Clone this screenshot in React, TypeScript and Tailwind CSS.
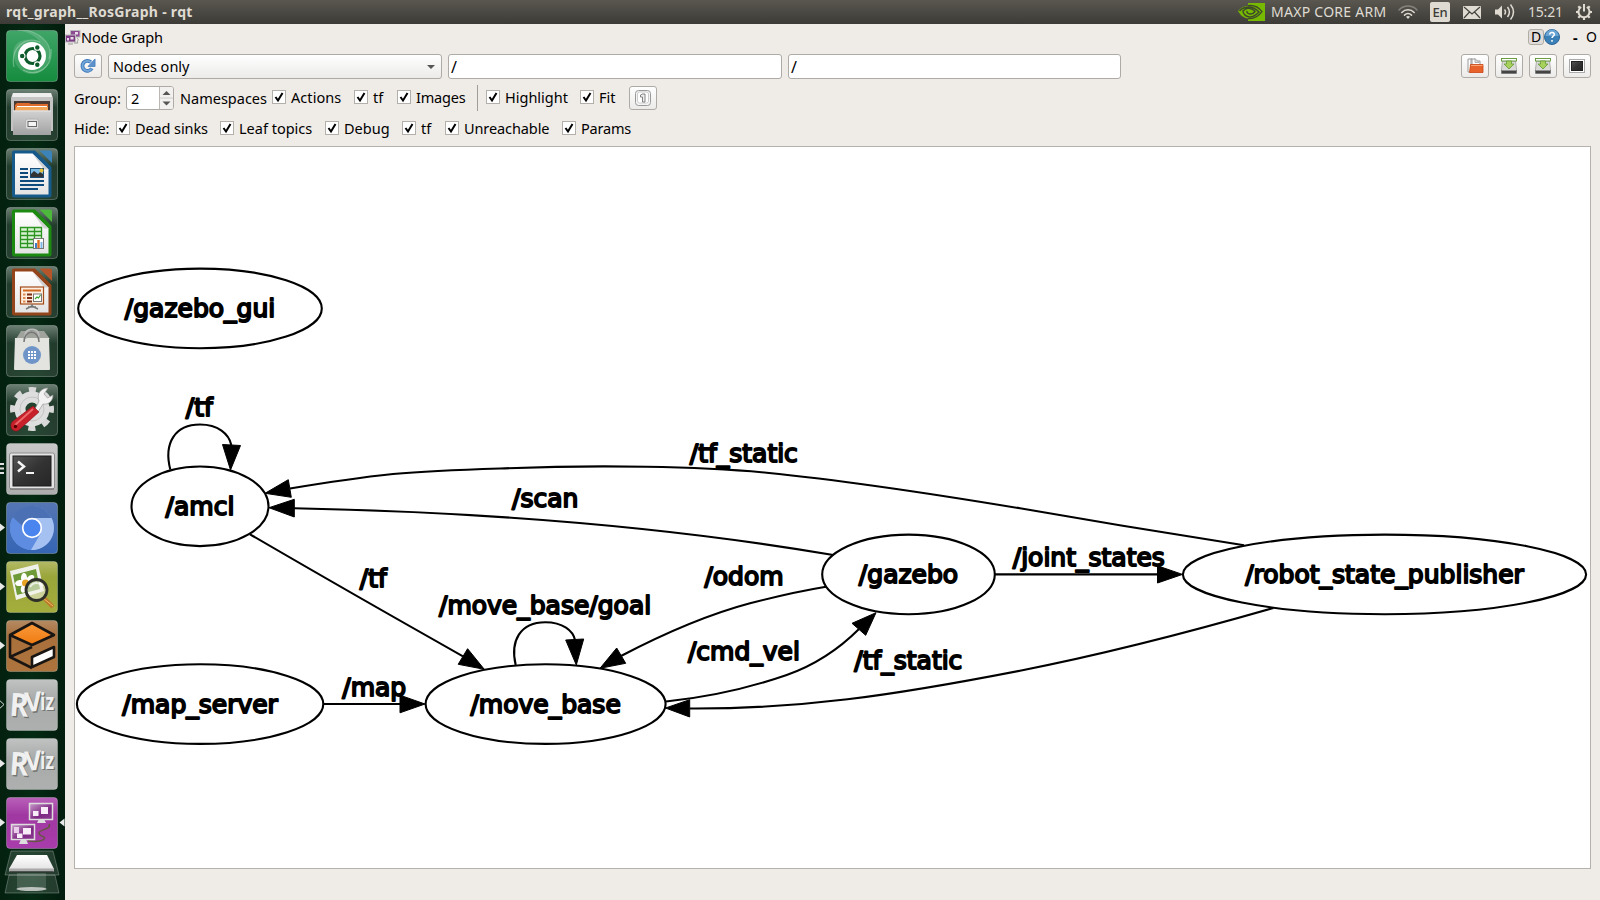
import React from "react";

const UI_FONT = "font-['Noto_Sans',sans-serif]";

/* ---------- top panel ---------- */

function TopPanel() {
  return (
    <header className="flex h-6 shrink-0 items-center bg-linear-to-b from-[#59574f] to-[#3d3b37] pl-[6px] pr-[7px] text-[#dfdbd2]">
      <span className="text-[14px] leading-6 font-bold tracking-[0.290px] whitespace-nowrap">rqt_graph__RosGraph - rqt</span>
      <div className="ml-auto flex h-6 items-center">
        <svg width="27" height="18" viewBox="0 0 27 18" className="mr-[6px]">
          <path d="M10 0h17v18H10v-2.500C5 15 2 11.500 0 8 3 4.500 6 3 10 2.700z" fill="#76b900" />
          <path d="M1.500 8C5 4.500 8 4 11 4c5 0 8 3 10 5-2 2-5 5-9 5-4 0-7-3-7-6 2-2 5-3 7-2.500 3 .5 4 2 5 3-1 1.500-3 2.700-5 2.500-2 0-3.500-1.500-3-3" fill="none" stroke="#3f4a2a" strokeWidth="1.500" />
          <path d="M10 2.700c7-1 11 2 14 6-3 4-8 7.500-14 6.800" fill="none" stroke="#3f4a2a" strokeWidth="1.300" />
        </svg>
        <span className="w-[127px] text-[14px] leading-6 tracking-[0.270px] whitespace-nowrap">MAXP CORE ARM</span>
        <svg width="20" height="16" viewBox="0 0 20 16" className="mr-[12px]" fill="none" strokeLinecap="round">
          <path d="M1 6C6 .8 14 .8 19 6" stroke="#85837c" strokeWidth="1.500" />
          <path d="M3.800 8.500C7.300 4.900 12.700 4.900 16.200 8.500" stroke="#dfdbd2" strokeWidth="1.500" />
          <path d="M6.500 11.100c2-2 5-2 7 0" stroke="#dfdbd2" strokeWidth="1.500" />
          <path d="M8 12.800c1.200-1 2.800-1 4 0L10 15z" fill="#dfdbd2" />
        </svg>
        <span className="mr-[13px] flex h-5 w-5 items-center justify-center rounded-[2px] bg-[#dfdbd2] pt-px text-[13px] leading-none font-medium tracking-[-0.3px] text-[#3c3b37]">En</span>
        <svg width="18" height="13" viewBox="0 0 18 13" className="mr-[13px]">
          <rect width="18" height="13" rx="1" fill="#dfdbd2" />
          <path d="M1 1l8 7 8-7M1 12l5.500-6M17 12l-5.500-6" fill="none" stroke="#45433e" strokeWidth="1.200" />
        </svg>
        <svg width="21" height="18" viewBox="0 0 21 18" className="mr-[13px]">
          <path d="M1 6.500h3L8 2.500v13L4 11.500H1z" fill="#dfdbd2" />
          <path d="M10.500 6.500q2 2.500 0 5M13.500 4q3.800 5 0 10M16.500 1.500q6 7.500 0 15" fill="none" stroke="#dfdbd2" strokeWidth="1.500" />
        </svg>
        <span className="w-[47px] text-[14px] leading-6 tracking-[-0.200px]">15:21</span>
        <svg width="18" height="18" viewBox="0 0 18 18" fill="none" stroke="#dfdbd2">
          <path d="M6.200 4A5.500 5.500 0 1 0 11.800 4" strokeWidth="2" />
          <path d="M9 1v7.500" strokeWidth="2" />
          <path d="M3.300 3.300l2 2M14.700 3.300l-2 2M1 9h2.500M14.500 9H17M3.300 14.700l2-2M14.700 14.700l-2-2M9 14.500V17" strokeWidth="2.200" />
        </svg>
      </div>
    </header>
  );
}

/* ---------- launcher ---------- */

function Tile({ children, fill = "url(#glass)", marker }: { children: React.ReactNode; fill?: string; marker?: "one" | "three" | "hollow" | "active" }) {
  return (
    <svg width="65" height="52" viewBox="-6 0 65 52" className="block shrink-0">
      <rect x="0.500" y="0.500" width="51" height="51" rx="3.500" fill={fill} stroke="#ffffff" strokeOpacity="0.250" />
      {children}
      {(marker === "one" || marker === "active") && <path d="M-6 21.500l5 4-5 4z" fill="#e8e8e8" />}
      {marker === "active" && <path d="M58.500 21.500l-5 4 5 4z" fill="#e8e8e8" />}
      {marker === "hollow" && <path d="M-6 21.800l4 3.700-4 3.700" fill="none" stroke="#d8d8d8" />}
      {marker === "three" && <path d="M-6 21h4M-6 25.500h4M-6 30h4" stroke="#e0e0e0" strokeWidth="2" />}
    </svg>
  );
}

function Gradients() {
  return (
    <svg width="0" height="0" className="absolute">
      <defs>
        <linearGradient id="glass" x1="0" y1="0" x2="0" y2="1">
          <stop offset="0" stopColor="#fff" stopOpacity="0.420" />
          <stop offset="0.350" stopColor="#fff" stopOpacity="0.120" />
          <stop offset="1" stopColor="#fff" stopOpacity="0.140" />
        </linearGradient>
        <linearGradient id="dash" x1="0" y1="0" x2="0" y2="1"><stop offset="0" stopColor="#3fa568" /><stop offset="1" stopColor="#158c3e" /></linearGradient>
        <linearGradient id="metal" x1="0" y1="0" x2="0" y2="1"><stop offset="0" stopColor="#d2d2d2" /><stop offset="1" stopColor="#a2a2a2" /></linearGradient>
        <linearGradient id="paper" x1="0" y1="0" x2="0" y2="1"><stop offset="0" stopColor="#fff" /><stop offset="1" stopColor="#e4e4e4" /></linearGradient>
        <linearGradient id="dark" x1="0" y1="0" x2="1" y2="1"><stop offset="0" stopColor="#555" /><stop offset="0.500" stopColor="#333" /><stop offset="1" stopColor="#262626" /></linearGradient>
        <linearGradient id="chrome" x1="0" y1="0" x2="0" y2="1"><stop offset="0" stopColor="#5576b4" /><stop offset="1" stopColor="#3565b4" /></linearGradient>
        <linearGradient id="olive" x1="0" y1="0" x2="0" y2="1"><stop offset="0" stopColor="#b3ba66" /><stop offset="0.300" stopColor="#9aa53a" /><stop offset="1" stopColor="#a3ae3c" /></linearGradient>
        <linearGradient id="brown" x1="0" y1="0" x2="0" y2="1"><stop offset="0" stopColor="#b58a62" /><stop offset="0.300" stopColor="#a9703c" /><stop offset="1" stopColor="#ad743d" /></linearGradient>
        <linearGradient id="gray" x1="0" y1="0" x2="0" y2="1"><stop offset="0" stopColor="#c0c3c1" /><stop offset="0.400" stopColor="#a7aaa8" /><stop offset="1" stopColor="#adb0ae" /></linearGradient>
        <linearGradient id="term" x1="0" y1="0" x2="0" y2="1"><stop offset="0" stopColor="#c8c8c8" /><stop offset="1" stopColor="#adadad" /></linearGradient>
        <linearGradient id="purple" x1="0" y1="0" x2="0" y2="1"><stop offset="0" stopColor="#b961b9" /><stop offset="0.350" stopColor="#a038a2" /><stop offset="1" stopColor="#a93cab" /></linearGradient>
        <linearGradient id="orange" x1="0" y1="0" x2="0" y2="1"><stop offset="0" stopColor="#f89a3c" /><stop offset="1" stopColor="#f07a10" /></linearGradient>
        <linearGradient id="screen" x1="0" y1="0" x2="1" y2="1"><stop offset="0" stopColor="#c99aca" /><stop offset="0.600" stopColor="#7d2782" /><stop offset="1" stopColor="#8d3a92" /></linearGradient>
      </defs>
    </svg>
  );
}

function OfficePage({ color, light, children }: { color: string; light: string; children: React.ReactNode }) {
  return (
    <g>
      <path d="M8 2.500h21L45.500 19v28a2.500 2.500 0 0 1-2.500 2.500H8.500A2.500 2.500 0 0 1 6 47V4.500a2 2 0 0 1 2-2z" fill={color} />
      <path d="M9 5.500h17.500L42.500 21.500V46.500H9z" fill="url(#paper)" />
      <path d="M26.500 5.500L42.500 21.500H38z" fill="#d0d0d0" />
      <path d="M33.500 2.500H44a2 2 0 0 1 2 2V15z" fill={light} />
      {children}
    </g>
  );
}

function RvizGlyphs() {
  return (
    <>
      <text x="3" y="36.500" fontSize="32" transform="rotate(4 4.500 37)" textLength="19" lengthAdjust="spacingAndGlyphs">R</text>
      <text x="19.500" y="33" fontSize="27" transform="rotate(-5 20 33)" textLength="17" lengthAdjust="spacingAndGlyphs">V</text>
      <text x="34" y="30.500" fontSize="24" textLength="14" lengthAdjust="spacingAndGlyphs">iz</text>
    </>
  );
}

function RvizLetters() {
  return (
    <g fontFamily="'Open Sans', sans-serif" fontWeight="bold">
      <g fill="#737573" transform="translate(1.300 1.500)"><RvizGlyphs /></g>
      <g fill="#f0f0f0"><RvizGlyphs /></g>
    </g>
  );
}

function Launcher() {
  return (
    <nav className="flex w-[65px] shrink-0 flex-col gap-[7px] overflow-hidden bg-linear-to-r from-[#04200f] via-[#042a13] to-[#031c0d] pt-[6px]">
      <Gradients />
      <Tile fill="url(#dash)">
        <g fill="none" stroke="#a5d8b5" strokeOpacity="0.500" strokeWidth="1.200">
          <path d="M8 37C4 18 20 5 34 12M12 0C30-1 48 12 43 29M45 19c2 20-15 28-28 21" />
        </g>
        <path d="M10 0C30 0 44 10 44 26a18 18 0 0 1-18 18C16 44 9 36 8 28 4 12 18 6 34 12 28 4 20 2 10 0z" fill="#fff" fillOpacity="0.150" />
        <circle cx="26" cy="26" r="14" fill="#fff" />
        <circle cx="26.500" cy="26" r="7.500" fill="none" stroke="#0d5a2b" strokeWidth="3.200" />
        <path d="M19 26L13 26M30 20l3.500-6M30 32l3.500 6" stroke="#fff" strokeWidth="1.200" />
        <g fill="#0d5a2b" stroke="#fff" strokeWidth="1.100"><circle cx="16.200" cy="26" r="2.800" /><circle cx="31.300" cy="17.500" r="2.800" /><circle cx="31.300" cy="34.700" r="2.800" /></g>
      </Tile>
      <Tile>
        <path d="M7 4h38l2 5v33H5V9z" fill="#c4c4c4" /><path d="M7 4h38l1 4H6z" fill="#eee" />
        <rect x="8" y="12" width="36" height="12" fill="#4a3c34" />
        <path d="M9 16l2-2h12l2 1h17v8H9z" fill="#dc6b2c" /><path d="M10 18h32v5H9z" fill="#f4a657" /><path d="M11 17.500h30" stroke="#fff" />
        <path d="M7 21.500h37a1 1 0 0 1 1 1V46H7z" fill="url(#metal)" /><path d="M7 22h38" stroke="#e5e5e5" />
        <rect x="19.500" y="30" width="13" height="10" rx="2" fill="#dedede" stroke="#b3b3b3" /><rect x="22" y="32.500" width="8.500" height="5" fill="#f5f5f5" stroke="#666" />
      </Tile>
      <Tile>
        <OfficePage color="#165a8c" light="#3b83b8">
          <path d="M14 21h8M14 25h8M14 29h8M14 33h24M14 37h24M14 41h18" stroke="#0e4a7b" strokeWidth="2" />
          <rect x="24.500" y="20.500" width="13" height="9" fill="#7dbbe6" stroke="#1a4d73" /><path d="M25 29v-3l3-3 4 3 2-2 3 2v3z" fill="#333" /><circle cx="35.500" cy="22.500" r="2" fill="#e7c33c" />
        </OfficePage>
      </Tile>
      <Tile>
        <OfficePage color="#1c8a10" light="#4cb83c">
          <rect x="14.500" y="20.500" width="21" height="20" fill="#d9f2d4" /><path d="M14.500 20.500h21v20h-21zM14.500 24.500h21M14.500 28.500h21M14.500 32.500h21M14.500 36.500h21M21.500 20v21M28.500 20v21" fill="none" stroke="#2c9420" strokeWidth="1.300" />
          <rect x="27.500" y="31.500" width="10" height="10" fill="#fff" stroke="#777" /><path d="M30 36v5" stroke="#3d7ec4" strokeWidth="2" /><path d="M32.500 33v8" stroke="#e06b1b" strokeWidth="2.400" /><path d="M35.500 35v6" stroke="#7db7e8" strokeWidth="2" />
        </OfficePage>
      </Tile>
      <Tile>
        <OfficePage color="#94441a" light="#b5562a">
          <rect x="14.500" y="21" width="23" height="17" fill="#fdeee2" stroke="#a54d19" strokeWidth="1.200" /><path d="M17 24.500h18" stroke="#d1681f" strokeWidth="2" /><path d="M17 28.500h2.500M17 32h2.500M17 35.500h2.500" stroke="#e08b4d" strokeWidth="2" /><path d="M21 28.500h5M21 32h5M21 35.500h5" stroke="#7d2d12" strokeWidth="2" /><rect x="27.500" y="28" width="8" height="7.500" fill="#fff" stroke="#777" /><path d="M29 33l2-2 1.500 1 2-3" fill="none" stroke="#39a533" strokeWidth="1.200" /><path d="M26 38v2l-6 3M26 40l6 3M22 41h8" fill="none" stroke="#777" strokeWidth="1.500" />
        </OfficePage>
      </Tile>
      <Tile>
        <path d="M10 14l5-8h23l6 8z" fill="#9fa39c" /><path d="M9 13h34l1 31a1 1 0 0 1-1 1H9a1 1 0 0 1-1-1z" fill="#e3e4df" />
        <path d="M19.500 14V9c0-6 13-6 13 0v5" fill="none" stroke="#bbb" strokeWidth="2" /><path d="M18 17c0-13 15-13 15 0" fill="none" stroke="#777" strokeWidth="1.500" />
        <circle cx="26" cy="30" r="9" fill="#6f95c8" />
        <g fill="#fff"><path d="M22 26h2v2h-2zM25 26h2v2h-2zM28 26h2v2h-2zM22 29h2v2h-2zM25 29h2v2h-2zM28 29h2v2h-2zM22 32h2v2h-2zM25 32h2v2h-2zM28 32h2v2h-2z" /></g>
      </Tile>
      <Tile>
        <circle cx="26" cy="25" r="19.500" fill="none" stroke="#d8d8d8" strokeWidth="5" strokeDasharray="7.300 7.980" strokeDashoffset="3.600" />
        <circle cx="26" cy="25" r="12" fill="none" stroke="#dedede" strokeWidth="11" /><circle cx="26" cy="25" r="12" fill="none" stroke="#c4c4c4" />
        <path d="M29 25l4-8c-3-7 2-13 9-13l-4 6 3.500 4 5.500-3c0 7-6 10-10 9l-5 8z" fill="#f2f2f2" stroke="#999" strokeWidth="0.700" />
        <path d="M27 22l6 6L14 45c-4 5-12 0-8-7z" fill="#c8202a" stroke="#8c1019" strokeWidth="0.600" /><path d="M27 25L9 41" stroke="#ec6a6a" strokeWidth="1.700" /><circle cx="9.500" cy="42.500" r="1.700" fill="#500" />
      </Tile>
      <Tile fill="url(#term)" marker="three">
        <rect x="3.500" y="10" width="45" height="36" rx="2" fill="#e4e4e4" stroke="#8d8d8d" /><path d="M4 46h44" stroke="#666" strokeWidth="1.200" />
        <rect x="7" y="13" width="38" height="30" fill="url(#dark)" stroke="#1d1d1d" />
        <path d="M12 18.500l6 5-6 5" fill="none" stroke="#f5f5f5" strokeWidth="2.500" /><path d="M20 30h8" stroke="#f5f5f5" strokeWidth="2" />
      </Tile>
      <Tile fill="url(#chrome)" marker="one">
        <circle cx="26" cy="26" r="22" fill="#6b96e3" /><path d="M26 26L6.500 16A22 22 0 0 0 25 48l9-17z" fill="#5d8ce0" /><path d="M26 16h19.500A22 22 0 0 1 25 48l10-17z" fill="#a5c1f2" /><path d="M6.500 15A22 22 0 0 1 45.500 16H26c-6 0-9 4-9.500 8z" fill="#4c70b4" />
        <circle cx="26" cy="26" r="9.300" fill="#4a84ee" stroke="#fff" strokeWidth="1.700" />
      </Tile>
      <Tile fill="url(#olive)" marker="one">
        <path d="M4 10l28-7 6 27-28 9z" fill="#f1f1ec" /><path d="M7 14l23-6 4 20-23 6z" fill="#6f9a38" />
        <g fill="#fff"><ellipse cx="18" cy="17" rx="3" ry="5" /><ellipse cx="24" cy="18" rx="3" ry="5" transform="rotate(50 24 18)" /><ellipse cx="14" cy="22" rx="3" ry="5" transform="rotate(80 14 22)" /><ellipse cx="18" cy="27" rx="3" ry="5" transform="rotate(20 18 27)" /></g>
        <circle cx="19.500" cy="22" r="3.500" fill="#e7a323" /><path d="M38 37l9 9" stroke="#bd7a2a" strokeWidth="4" /><path d="M37 37l10 8" stroke="#edbf66" strokeWidth="1" />
        <circle cx="30.500" cy="29" r="10.500" fill="#f2f3ea" fillOpacity="0.550" stroke="#2d2f28" strokeWidth="2.800" /><path d="M24 26c4-6 10-4 13-1" fill="none" stroke="#fff" strokeOpacity="0.700" strokeWidth="2" />
      </Tile>
      <Tile fill="url(#brown)" marker="one">
        <path d="M4 15L26 3l22 12-22 10z" fill="url(#orange)" /><path d="M4 15L26 3l22 12-22 10zM4 15v22l22 11M4 37l22-10" fill="none" stroke="#181512" strokeWidth="2.600" strokeLinejoin="round" /><path d="M26 47V37l22-10v10z" fill="#fff" stroke="#181512" strokeWidth="2.600" strokeLinejoin="round" />
      </Tile>
      <Tile fill="url(#gray)" marker="hollow"><RvizLetters /></Tile>
      <Tile fill="url(#gray)" marker="one"><RvizLetters /></Tile>
      <div className="flex flex-col">
        <Tile fill="url(#purple)" marker="active">
          <path d="M43 27c3 6-10 5-10 9s8 3 5 6-8 3-16 2" fill="none" stroke="#654" strokeWidth="1.500" />
          <path d="M33 22h5l2 4h-9zM15 42h5l2 5h-9z" fill="#ddd" />
          <rect x="23.500" y="6.500" width="23" height="16" fill="url(#screen)" stroke="#ddd" strokeWidth="1.500" /><rect x="5.500" y="27.500" width="23" height="15" fill="url(#screen)" stroke="#ddd" strokeWidth="1.500" />
          <path d="M35 10h7v7h-7zM27 14h5.500v5H27zM17 31h8v6.500h-8zM11 36.500h5.500v4.500H11z" fill="#f8ecf8" /><path d="M8 30h5v6H8z" fill="#e9cdea" />
        </Tile>
        <svg width="65" height="47" viewBox="0 0 65 47" className="block shrink-0">
          <path d="M11 2h42l6 24H5zM9 26h46l4 18H5z" fill="#fff" fillOpacity="0.130" stroke="#fff" strokeOpacity="0.250" />
          <path d="M17 6h30l7 14H9z" fill="url(#paper)" /><path d="M9 19.500h45v3H9z" fill="#aaa" /><path d="M10 23h43" stroke="#333" />
          <path d="M17 24h29v16H17z" fill="#fff" fillOpacity="0.150" /><ellipse cx="31.500" cy="40" rx="15" ry="2" fill="#ddd" fillOpacity="0.800" />
        </svg>
      </div>
    </nav>
  );
}

/* ---------- form widgets ---------- */

function Check({ label, className }: { label: string; className: string }) {
  return (
    <label className={`flex h-6 items-center whitespace-nowrap ${className}`}>
      <svg width="14" height="14" viewBox="0 0 14 14" className="mr-[5px] shrink-0">
        <rect x="0.500" y="0.500" width="13" height="13" fill="#fff" stroke="#b3afaa" />
        <path d="M3.500 7l2.500 3.500L10.500 3" fill="none" stroke="#000" strokeWidth="2" />
      </svg>
      <span>{label}</span>
    </label>
  );
}

function ToolButton({ children }: { children: React.ReactNode }) {
  return (
    <button className="flex h-6 w-7 shrink-0 items-center justify-center rounded-[3px] border border-[#aeaba6] bg-linear-to-b from-white to-[#ecebe9]">
      {children}
    </button>
  );
}

function SaveIcon() {
  return (
    <svg width="16" height="16" viewBox="0 0 16 16">
      <path d="M1.500 3h13l1 8v4.500H.5V11z" fill="#d8d8d6" stroke="#999" strokeWidth="0.700" />
      <path d="M.5 12h15v3.500H.5z" fill="#444" /><path d="M1 12h14" stroke="#ddd" />
      <rect x="0.500" y="0.500" width="15" height="2.500" fill="#fff" stroke="#5e9430" strokeWidth="0.900" />
      <path d="M5.500 3h5v3h2.500L8 11 3 6h2.500z" fill="#a8d05c" stroke="#659a34" strokeWidth="0.800" />
    </svg>
  );
}

/* ---------- graph ---------- */

const nodes = [
  { name: "/gazebo_gui", cx: 200, cy: 308.4, rx: 121.8 },
  { name: "/amcl", cx: 200, cy: 506.3, rx: 68.5 },
  { name: "/map_server", cx: 200.1, cy: 704.1, rx: 123.2 },
  { name: "/move_base", cx: 545.6, cy: 704.1, rx: 120 },
  { name: "/gazebo", cx: 908.5, cy: 574.4, rx: 86.3 },
  { name: "/robot_state_publisher", cx: 1384.5, cy: 574.4, rx: 201.6 },
];

const labels = [
  { text: "/tf", x: 199.3, y: 416.4 },
  { text: "/tf_static", x: 743.8, y: 462 },
  { text: "/scan", x: 545.3, y: 507.4 },
  { text: "/tf", x: 373.3, y: 587 },
  { text: "/move_base/goal", x: 545.1, y: 614 },
  { text: "/odom", x: 744, y: 584.5 },
  { text: "/cmd_vel", x: 743.9, y: 659.6 },
  { text: "/tf_static", x: 908.3, y: 668.8 },
  { text: "/joint_states", x: 1088.8, y: 566.3 },
  { text: "/map", x: 374.2, y: 696 },
];

const edges = [
  { d: "M170.300 469.500C163.500 443 175 424.500 200 424.500C218 424.500 229 434 231.300 445", head: "222.500,444.500 240.500,445.500 230.500,470" },
  { d: "M515.700 665C510 641 520 622.200 545.300 622.200C563 622.200 573 631 575 640", head: "565.700,640 583.700,639 576.300,665" },
  { d: "M250 534.300Q349 592 463 656.300", head: "467.600,648.700 458.200,664.300 484.300,669.300" },
  { d: "M323.700 704H401", head: "400,695.200 400,712.800 425,704" },
  { d: "M826 586.700C800 591 774 597 750 603.300C706 615 667 632 621 656", head: "616.700,648 625.700,663.300 600,668.300" },
  { d: "M666 701.500C710 697 752 687 786.700 675C815 665 838 650 859 629", head: "852,623.300 865.700,635.300 876,612.700" },
  { d: "M1273.400 608C1190 632 1105 654 1020 670.700C890 696 800 709 690 708.500", head: "689.700,699.700 689.700,717 665.500,708" },
  { d: "M833.300 555C660 525.500 480 512 294 508.300", head: "294.300,499.300 294.300,517 269,507.700" },
  { d: "M1244 545.300C1160 532 1100 522 1020 508.300C940 495 850 481 766.700 472.700C700 466.500 600 464.500 500 468.500C450 470 420 471.500 393 474C355 478 320 483.500 290 488.500", head: "288.300,479.700 291.300,497.300 265,493.300" },
  { d: "M995 574.400H1158", head: "1157.500,565.800 1157.500,583 1182.500,574.400" },
];

function Graph() {
  return (
    <svg width="1515" height="721" viewBox="75 147 1515 721" className="block">
      <g fill="none" stroke="#000" strokeWidth="2.100">
        {nodes.map((n) => <ellipse key={n.name} cx={n.cx} cy={n.cy} rx={n.rx} ry="39.800" />)}
        {edges.map((e) => <path key={e.d} d={e.d} />)}
      </g>
      <g fill="#000" stroke="#000" strokeWidth="1">
        {edges.map((e) => <polygon key={e.head} points={e.head} />)}
      </g>
      <g fontFamily="'DejaVu Sans', sans-serif" fontSize="25" textAnchor="middle" stroke="#000" strokeWidth="1.850" strokeLinejoin="round">
        {nodes.map((n) => <text key={n.name} x={n.cx} y={n.cy + 9}>{n.name}</text>)}
        {labels.map((l, i) => <text key={i} x={l.x} y={l.y}>{l.text}</text>)}
      </g>
    </svg>
  );
}

/* ---------- window ---------- */

export default function App() {
  return (
    <div className={`flex h-[900px] w-[1600px] flex-col overflow-hidden bg-[#efebe7] text-[14.500px] leading-6 text-black ${UI_FONT}`}>
      <TopPanel />
      <div className="flex min-h-0 flex-1">
        <Launcher />
        <main className="flex min-w-0 flex-1 flex-col">
          <div className="flex h-7 items-center pr-[2px] pb-[2px]">
            <svg width="16" height="16" viewBox="0 0 16 16">
              <rect x="5.500" y="1.500" width="9.500" height="6.500" fill="#8b4a91" stroke="#bbb" /><rect x="0.500" y="6" width="10" height="7" fill="#7b3a82" stroke="#bbb" />
              <path d="M10 3h3v2.500h-3zM5.500 8h3v2.500h-3zM2 9h2v2.500H2z" fill="#ecd8ee" /><path d="M3 15h5M12 9c3 2-1 3 1 5H9" fill="none" stroke="#999" />
            </svg>
            <span className="tracking-[-0.1px]">Node Graph</span>
            <span className="ml-auto flex h-4 w-4 items-center justify-center rounded-[3px] border border-[#b0aca6] bg-[#dfdbd8] text-[14px] leading-none">D</span>
            <svg width="16" height="16" viewBox="0 0 16 16" className="mr-[13px]">
              <circle cx="8" cy="8" r="7.500" fill="#3c80b8" stroke="#2d6798" /><path d="M1.500 7a6.500 6.500 0 0 1 13 0z" fill="#6ba5d4" />
              <path d="M5.700 5.500c.3-3 5-2.500 4.600.2-.2 1.500-2.300 1.600-2.300 3.300M8 11v1.800" fill="none" stroke="#fff" strokeWidth="1.500" />
            </svg>
            <span className="w-[13px] font-bold">-</span>
            <span className="w-3 text-[14px]">O</span>
          </div>

          <div className="flex h-[27px] items-start pt-[2px] pr-[9px] pl-[9px]">
            <ToolButton>
              <svg width="16" height="16" viewBox="0 0 17 16">
                <path d="M12.500 10.500A5.300 5.300 0 1 1 11.500 4" fill="none" stroke="#3f7ab8" strokeWidth="4" /><path d="M16 .5v8H8.500z" fill="#5b92cc" stroke="#3f7ab8" strokeWidth="0.800" /><path d="M12.500 10.500A5.300 5.300 0 1 1 11.500 4" fill="none" stroke="#75a9dc" strokeWidth="2" />
              </svg>
            </ToolButton>
            <div className="ml-[6px] flex h-[25px] w-[334px] items-center justify-between rounded-[3px] border border-[#aeaba6] bg-linear-to-b from-white to-[#ecebe9] pr-[6px] pl-[4px]">
              <span className="leading-[23px]">Nodes only</span>
              <svg width="8" height="4" viewBox="0 0 8 4"><path d="M0 0h8L4 4z" fill="#555" /></svg>
            </div>
            <div className="ml-[6px] h-[25px] w-[334px] rounded-[3px] border border-[#aeaba6] bg-white pl-[2px] text-[16px] leading-[25px]">/</div>
            <div className="ml-[6px] h-[25px] w-[333px] rounded-[3px] border border-[#aeaba6] bg-white pl-[2px] text-[16px] leading-[25px]">/</div>
            <div className="ml-auto flex gap-[6px]">
              <ToolButton>
                <svg width="17" height="16" viewBox="0 0 17 16">
                  <path d="M1 1h4v13H1zM4 1h4l2 2h3v6H4z" fill="#fff" stroke="#999" /><path d="M8 .5l4 4H8z" fill="#ddd" stroke="#999" strokeWidth="0.700" /><path d="M3.500 6.500h12.500v8H2.500z" fill="#e8632c" stroke="#c94412" strokeWidth="0.800" /><path d="M4 7.500h11.500" stroke="#f7a677" />
                </svg>
              </ToolButton>
              <ToolButton><SaveIcon /></ToolButton>
              <ToolButton><SaveIcon /></ToolButton>
              <ToolButton>
                <svg width="16" height="14" viewBox="0 0 16 14"><rect x="0.500" y="0.500" width="15" height="13" fill="#fff" stroke="#aaa" /><rect x="2.500" y="2.500" width="11" height="9" fill="url(#dark)" stroke="#222" /></svg>
              </ToolButton>
            </div>
          </div>

          <div className="flex h-[37px] items-start pt-[6px] pl-[9px]">
            <span className="mt-px w-[52px]">Group:</span>
            <div className="mt-px flex h-6 w-12 overflow-hidden rounded-[3px] border border-[#aeaba6] bg-white">
              <span className="w-[33px] border-r border-[#bbb8b4] pl-[4px] leading-[22px]">2</span>
              <svg width="13" height="22" viewBox="0 0 13 22"><rect width="13" height="22" fill="#f3f1ef" /><path d="M0 11h13" stroke="#ccc" /><path d="M2.500 8h8L6.500 4zM2.500 14.500h8l-4 4z" fill="#555" /></svg>
            </div>
            <span className="mt-px ml-[6px] w-[92px]">Namespaces</span>
            <Check label="Actions" className="w-[82px] tracking-[0.060px]" />
            <Check label="tf" className="w-[43px]" />
            <Check label="Images" className="w-[80px] tracking-[-0.200px]" />
            <span className="h-[26px] w-[9px] border-l border-[#a09d99]" />
            <Check label="Highlight" className="w-[94px]" />
            <Check label="Fit" className="w-[49px]" />
            <div className="mt-px">
              <ToolButton>
                <svg width="16" height="16" viewBox="0 0 16 16"><rect x="0.500" y="0.500" width="15" height="15" rx="3" fill="#f4f4f4" stroke="#999" /><rect x="2.500" y="2" width="11" height="11" rx="2" fill="#fff" stroke="#ccc" /><path d="M5.500 5l2-1h2.500v8H7.500V7h-2z" fill="#eee" stroke="#777" strokeWidth="0.900" /></svg>
              </ToolButton>
            </div>
          </div>

          <div className="flex h-[30px] items-start pl-[9px]">
            <span className="w-[42px]">Hide:</span>
            <Check label="Dead sinks" className="w-[104px] tracking-[-0.100px]" />
            <Check label="Leaf topics" className="w-[105px]" />
            <Check label="Debug" className="w-[77px]" />
            <Check label="tf" className="w-[43px]" />
            <Check label="Unreachable" className="w-[117px] tracking-[-0.100px]" />
            <Check label="Params" className="w-[70px] tracking-[-0.200px]" />
          </div>

          <div className="ml-[9px] h-[723px] w-[1517px] shrink-0 overflow-hidden border border-[#b5b1ac] bg-white">
            <Graph />
          </div>
        </main>
      </div>
    </div>
  );
}
